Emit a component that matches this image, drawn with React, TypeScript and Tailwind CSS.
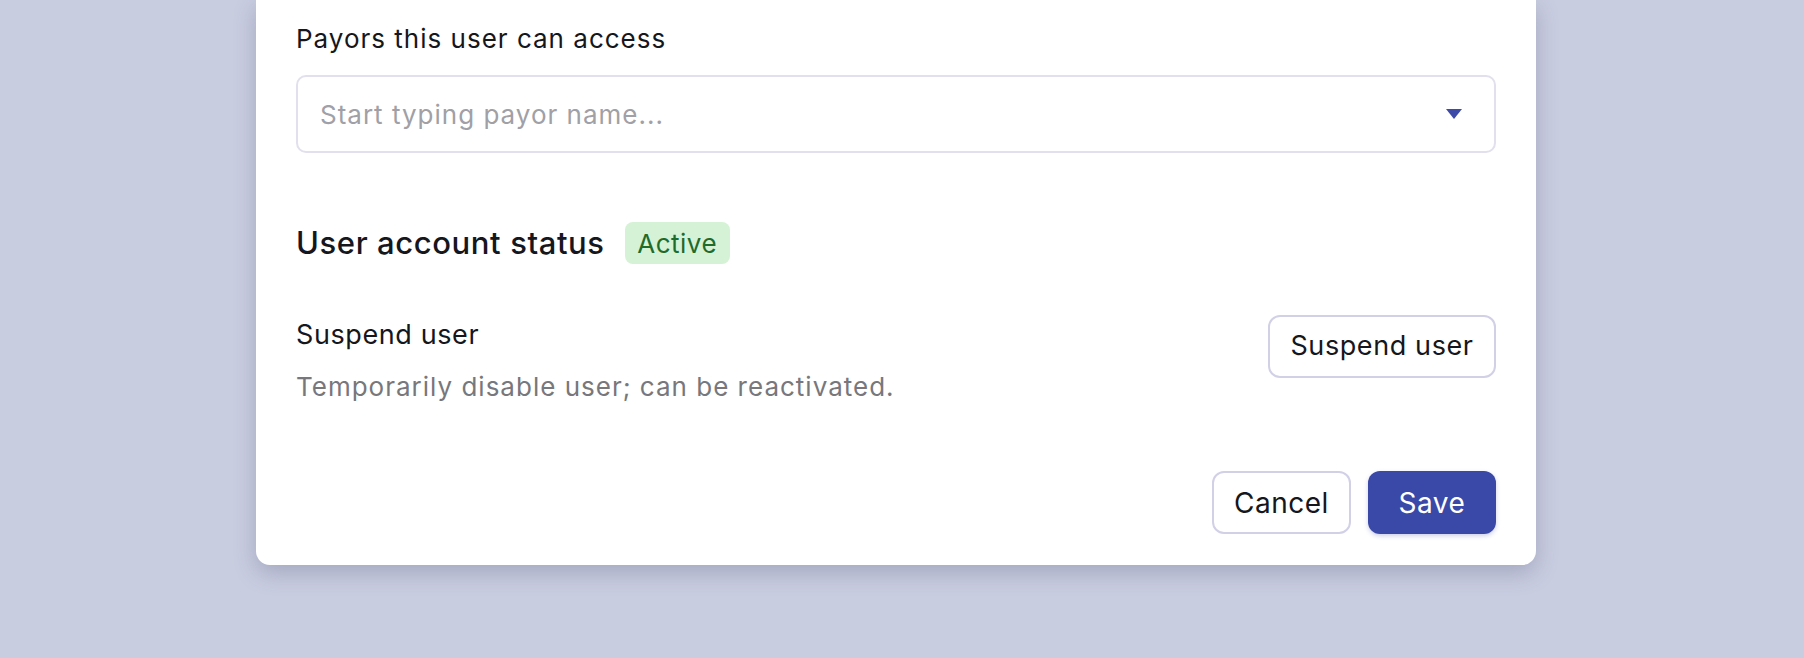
import React from "react";

const font = { fontFamily: "Inter, 'Noto Sans', sans-serif" };

const App = () => {
  return (
    <div className="w-full h-[658px] bg-[#c9cde0] overflow-hidden" style={font}>
      <div className="ml-[256px] w-[1280px] bg-white rounded-b-[14px] shadow-[0_8px_22px_rgba(70,72,110,0.28)] px-10 pt-[22px] pb-[31px]">
        <p className="text-[26px] leading-[34px] tracking-[1px] text-[#16161d]">Payors this user can access</p>
        <div className="mt-[19px] h-[78px] border-2 border-[#e1e0ec] rounded-[10px] flex items-center justify-between pl-[22px] pr-[32px]">
          <span className="text-[26px] tracking-[1px] text-[#a0a0a6]">Start typing payor name...</span>
          <svg width="16" height="10" viewBox="0 0 16 10">
            <path d="M0 0 H16 L8 10 Z" fill="#3d4aa8" />
          </svg>
        </div>

        <div className="mt-[69px] flex items-center gap-5">
          <h2 className="text-[31px] leading-[42px] tracking-[0.6px] font-medium text-[#16161d]">User account status</h2>
          <span className="h-[42px] w-[105px] flex items-center justify-center rounded-[8px] bg-[#d6f2d6] text-[#1f6b2c] text-[26px] tracking-[0.5px]">Active</span>
        </div>

        <div className="mt-[51px] flex items-start justify-between">
          <div className="pt-[2px]">
            <p className="text-[27px] leading-[36px] tracking-[0.6px] text-[#16161d]">Suspend user</p>
            <p className="mt-[17px] text-[26px] leading-[34px] tracking-[1px] text-[#77777c]">Temporarily disable user; can be reactivated.</p>
          </div>
          <button className="h-[63px] w-[228px] border-2 border-[#d2d0e6] rounded-[12px] bg-white text-[27px] tracking-[0.6px] text-[#16161d]">
            Suspend user
          </button>
        </div>

        <div className="mt-[67px] flex justify-end gap-[17px]">
          <button className="h-[63px] w-[139px] border-2 border-[#d2d0e6] rounded-[12px] bg-white text-[28px] tracking-[0.5px] text-[#16161d]">
            Cancel
          </button>
          <button className="h-[63px] w-[128px] rounded-[12px] bg-[#3a48a8] text-[28px] tracking-[0.5px] text-white shadow-[0_2px_4px_rgba(58,72,168,0.25)]">
            Save
          </button>
        </div>
      </div>
    </div>
  );
};

export default App;
